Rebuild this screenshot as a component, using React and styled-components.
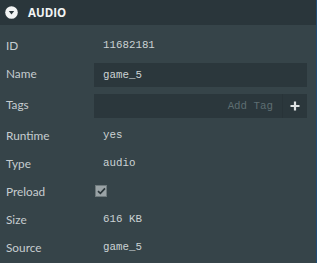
import styled, { createGlobalStyle } from 'styled-components'

const Global = createGlobalStyle`
    html, body { margin: 0; padding: 0; background: #364449; }
    body { width: 317px; height: 263px; overflow: hidden; }
`

const Panel = styled.div`
    width: 316px;
    height: 263px;
    background: #364449;
    border-right: 1px solid #1f4b72;
    font-family: Lato, "Open Sans", sans-serif;
`

const Header = styled.div`
    height: 25px;
    background: #2a363b;
    display: flex;
    align-items: center;
    padding-left: 5px;
    gap: 10px;
`

const HeaderTitle = styled.span`
    color: #f2f4f4;
    font-family: "Open Sans", sans-serif;
    font-weight: 700;
    font-size: 11.5px;
`

const Body = styled.div`
    padding-top: 6px;
    display: flex;
    flex-direction: column;
`

const Row = styled.div`
    display: flex;
    align-items: center;
    height: ${props => props.tall ? "31px" : "28px"};
`

const Label = styled.div`
    width: 88px;
    padding-left: 6px;
    color: #c6cdd0;
    font-size: 11.8px;
    margin-top: ${props => props.tall ? "-3px" : "0"};
`

const Value = styled.div`
    padding-left: 9px;
    color: #cbd2d4;
    font-family: "Liberation Mono", monospace;
    font-size: 10.8px;
`

const InputBox = styled.div`
    width: 213px;
    height: 24px;
    background: #2b373c;
    display: flex;
    align-items: center;
    justify-content: ${props => props.right ? "flex-end" : "flex-start"};
`

const Placeholder = styled.span`
    color: #5e6e72;
    font-family: "Liberation Mono", monospace;
    font-size: 10.8px;
    padding-right: 9px;
`

const PlusButton = styled.div`
    width: 24px;
    height: 24px;
    border-left: 1px solid #283338;
    display: flex;
    align-items: center;
    justify-content: center;
`

const Check = styled.div`
    margin-left: 1px;
    width: 12px;
    height: 12px;
    background: #9aa3a6;
    border: 1px solid #6f7a7d;
    box-sizing: border-box;
    display: flex;
    align-items: center;
    justify-content: center;
`

function ToggleIcon() {
    return (
        <svg width="13" height="13" viewBox="0 0 13 13">
            <circle cx="6.5" cy="6.5" r="6.3" fill="#f2f4f4" />
            <path d="M3.8 5 L9.2 5 L6.5 8.6 Z" fill="#2a363b" />
        </svg>
    )
}

export default function App() {
    return (
        <Panel>
            <Global />
            <Header>
                <ToggleIcon />
                <HeaderTitle>AUDIO</HeaderTitle>
            </Header>
            <Body>
                <Row>
                    <Label>ID</Label>
                    <Value>11682181</Value>
                </Row>
                <Row tall>
                    <Label tall>Name</Label>
                    <InputBox>
                        <Value>game_5</Value>
                    </InputBox>
                </Row>
                <Row tall>
                    <Label tall>Tags</Label>
                    <InputBox right>
                        <Placeholder>Add Tag</Placeholder>
                        <PlusButton>
                            <svg width="10" height="10" viewBox="0 0 10 10">
                                <path d="M5 0.5 V9.5 M0.5 5 H9.5" stroke="#dfe3e4" strokeWidth="2.2" />
                            </svg>
                        </PlusButton>
                    </InputBox>
                </Row>
                <Row>
                    <Label>Runtime</Label>
                    <Value>yes</Value>
                </Row>
                <Row>
                    <Label>Type</Label>
                    <Value>audio</Value>
                </Row>
                <Row>
                    <Label>Preload</Label>
                    <Check>
                        <svg width="9" height="8" viewBox="0 0 9 8">
                            <path d="M1 4.2 L3.4 6.4 L8 1.4" stroke="#2c373b" strokeWidth="1.7" fill="none" />
                        </svg>
                    </Check>
                </Row>
                <Row>
                    <Label>Size</Label>
                    <Value>616 KB</Value>
                </Row>
                <Row>
                    <Label>Source</Label>
                    <Value>game_5</Value>
                </Row>
            </Body>
        </Panel>
    )
}
